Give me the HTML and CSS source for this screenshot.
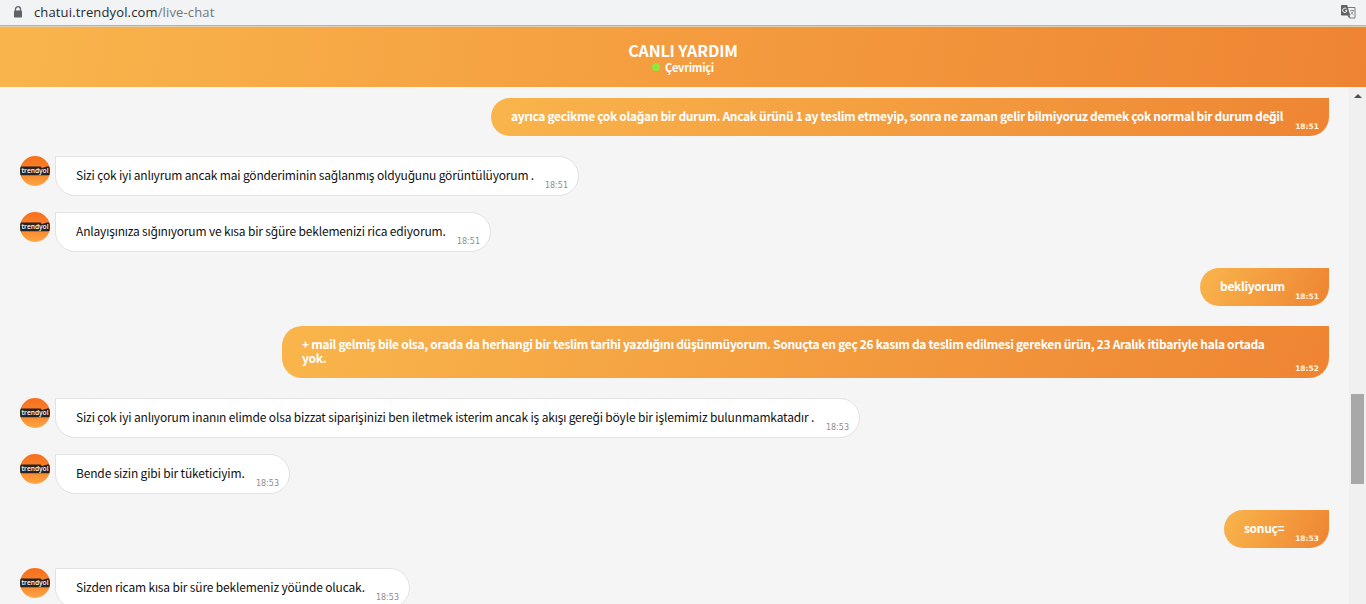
FILE: index.html
```html
<!DOCTYPE html>
<html lang="tr">
<head>
  <meta charset="UTF-8" />
  <meta name="viewport" content="width=device-width, initial-scale=1" />
  <title>Canlı Yardım</title>
  <link rel="stylesheet" href="styles.css">
</head>
<body>

<!-- avatar -->
<svg class="defs" width="0" height="0">
  <defs>
    <linearGradient id="avatarBg" x1="0" y1="0" x2="0" y2="1">
      <stop offset="0" stop-color="#f7701f" />
      <stop offset="0.55" stop-color="#f98429" />
      <stop offset="1" stop-color="#fda644" />
    </linearGradient>
    <clipPath id="avatarClip"><circle cx="15" cy="15" r="15" /></clipPath>
    <symbol id="avatar" viewBox="0 0 30 30">
      <g clip-path="url(#avatarClip)">
        <rect width="30" height="30" fill="url(#avatarBg)" />
        <path d="M0 10.5H20.5L22 12L27 10.5H30V19.3H0Z" fill="#252323" />
        <text x="15" y="17.2" text-anchor="middle" textLength="27" lengthAdjust="spacingAndGlyphs" class="logo-text">trendyol</text>
      </g>
    </symbol>
  </defs>
</svg>

<div class="address-bar">
  <svg class="lock" width="10" height="12" viewBox="0 0 10 12">
    <path d="M2.5 5V3.2a2.5 2.5 0 0 1 5 0V5" fill="none" stroke="#5f6368" stroke-width="1.3" />
    <rect x="1" y="4.5" width="8" height="7" rx="0.8" fill="#5f6368" />
  </svg>
  <span class="url">chatui.trendyol.com<span class="path">/live-chat</span></span>
  <svg class="translate" width="15" height="14" viewBox="0 0 15 14">
    <path d="M6.5 2.5H14V13H8.5L7 10.5" fill="#f4f5f6" stroke="#77797c" stroke-width="1" />
    <path d="M0.8 0H6.2L9.2 10.6H0.8A.8.8 0 0 1 0 9.8V.8A.8.8 0 0 1 .8 0Z" fill="#5f6165" />
    <path d="M6.7 10.6H9.2L8.4 13Z" fill="#5f6165" />
    <path d="M5.5 3.9A2.2 2.2 0 1 0 6 5.7H4.2" fill="none" stroke="#fff" stroke-width="1" />
    <path d="M9 5.5H13M11 4.6V5.5M12.3 5.6C11.8 7.6 10.8 8.7 9.4 9.6M9.8 6.8C10.4 8.2 11.4 9.2 12.6 9.8" fill="none" stroke="#85878a" stroke-width="0.8" />
  </svg>
</div>

<div class="header">
  <div class="title">CANLI YARDIM</div>
  <div class="status"><span class="dot"></span>Çevrimiçi</div>
</div>

<div class="chat">
  <div class="messages">
    <div class="row user">
      <div class="bubble w-838"><p>ayrıca gecikme çok olağan bir durum. Ancak ürünü 1 ay teslim etmeyip, sonra ne zaman gelir bilmiyoruz demek çok normal bir durum değil</p><span class="time">18:51</span></div>
    </div>
    <div class="row agent">
      <svg class="avatar"><use href="#avatar" /></svg>
      <div class="bubble w-524"><p>Sizi çok iyi anlıyrum ancak mai gönderiminin sağlanmış oldyuğunu görüntülüyorum .</p><span class="time">18:51</span></div>
    </div>
    <div class="row agent">
      <svg class="avatar"><use href="#avatar" /></svg>
      <div class="bubble w-436"><p>Anlayışınıza sığınıyorum ve kısa bir sğüre beklemenizi rica ediyorum.</p><span class="time">18:51</span></div>
    </div>
    <div class="row user">
      <div class="bubble w-129"><p>bekliyorum</p><span class="time">18:51</span></div>
    </div>
    <div class="row user">
      <div class="bubble w-1047"><p>+ mail gelmiş bile olsa, orada da herhangi bir teslim tarihi yazdığını düşünmüyorum. Sonuçta en geç 26 kasım da teslim edilmesi gereken ürün, 23 Aralık itibariyle hala ortada<br>yok.</p><span class="time">18:52</span></div>
    </div>
    <div class="row agent">
      <svg class="avatar"><use href="#avatar" /></svg>
      <div class="bubble w-805"><p>Sizi çok iyi anlıyorum inanın elimde olsa bizzat siparişinizi ben iletmek isterim ancak iş akışı gereği böyle bir işlemimiz bulunmamkatadır .</p><span class="time">18:53</span></div>
    </div>
    <div class="row agent">
      <svg class="avatar"><use href="#avatar" /></svg>
      <div class="bubble w-235"><p>Bende sizin gibi bir tüketiciyim.</p><span class="time">18:53</span></div>
    </div>
    <div class="row user">
      <div class="bubble w-105"><p>sonuç=</p><span class="time">18:53</span></div>
    </div>
    <div class="row agent">
      <svg class="avatar"><use href="#avatar" /></svg>
      <div class="bubble w-355"><p>Sizden ricam kısa bir süre beklemeniz yöünde olucak.</p><span class="time">18:53</span></div>
    </div>
  </div>
  <div class="scrollbar">
    <svg class="arrow" width="8" height="4" viewBox="0 0 8 4"><path d="M0 4L4 0L8 4Z" fill="#505050" /></svg>
    <div class="thumb"></div>
  </div>
</div>

</body>
</html>
```
FILE: styles.css
```css
* {
  box-sizing: border-box;
}
body {
  margin: 0;
  height: 604px;
  overflow: hidden;
  display: flex;
  flex-direction: column;
  background: #f5f5f5;
  font-family: "Noto Sans CJK SC", "Noto Sans", sans-serif;
}
.defs {
  position: absolute;
}
.address-bar {
  height: 26px;
  flex-shrink: 0;
  display: flex;
  align-items: center;
  padding: 0 10px 1px 13px;
  background: #f1f3f4;
  border-bottom: 1px solid #b5b2ae;
  font-family: "Open Sans", sans-serif;
}
.url {
  flex: 1;
  margin-left: 11px;
  font-size: 13px;
  letter-spacing: 0.14px;
  color: #27292c;
}
.path {
  color: #73767a;
}
.header {
  height: 61px;
  flex-shrink: 0;
  padding-top: 14px;
  border-top: 1px solid #e3cfb4;
  background: linear-gradient(98deg, #f9b54c, #ee8432);
  color: #fff;
  text-align: center;
  font-weight: bold;
}
.title {
  font-size: 16px;
  line-height: 18px;
  letter-spacing: -0.15px;
}
.status {
  display: flex;
  justify-content: center;
  gap: 5px;
  margin-top: 1px;
  font-size: 11px;
  line-height: 14px;
  letter-spacing: -0.25px;
}
.dot {
  width: 8px;
  height: 8px;
  margin-top: 3px;
  border-radius: 50%;
  background: #8fe63c;
}
.chat {
  flex: 1;
  display: flex;
  min-height: 0;
}
.messages {
  flex: 1;
  padding: 11px 20px 0;
  overflow: hidden;
}
.row {
  display: flex;
}
.user {
  justify-content: flex-end;
  margin-bottom: 20px;
}
.agent {
  margin-bottom: 16px;
}
.avatar {
  width: 30px;
  height: 30px;
  margin-right: 5px;
}
.logo-text {
  font: 600 7.5px "Open Sans", sans-serif;
  fill: #fff;
}
.bubble {
  display: flex;
  justify-content: space-between;
  align-items: flex-end;
  padding: 11px 10px 4px 20px;
  font-size: 12px;
  line-height: 14px;
  white-space: nowrap;
}
.bubble p {
  margin: 0;
  padding-bottom: 9px;
}
.user .bubble {
  border-radius: 20px 0 20px 20px;
  background: linear-gradient(113deg, #f9b54c, #ee8432);
  color: #fff;
  font-weight: bold;
  letter-spacing: -0.335px;
}
.agent .bubble {
  height: 40px;
  border: 1px solid #e2e2e2;
  border-radius: 0 20px 20px 20px;
  background: #fff;
  color: #111;
  letter-spacing: -0.165px;
}
.bubble .time {
  font-size: 8px;
  line-height: 10px;
  font-family: "DejaVu Sans", sans-serif;
  letter-spacing: 0;
}
.user .time {
  font-size: 7.5px;
  color: #fff3e0;
}
.agent .time {
  color: #8e8e8e;
}
.w-838 { width: 838px; }
.agent .w-524 { width: 524px; letter-spacing: -0.18px; }
.w-436 { width: 436px; }
.w-129 { width: 129px; }
.user .w-1047 { width: 1047px; letter-spacing: -0.312px; }
.w-805 { width: 805px; }
.w-235 { width: 235px; }
.w-105 { width: 105px; }
.w-355 { width: 355px; }
.scrollbar {
  width: 17px;
  padding: 7px 2px 0;
  background: #f0f0f0;
}
.arrow {
  display: block;
  margin: 0 auto;
}
.thumb {
  height: 90px;
  margin-top: 296px;
  background: #a8a8a8;
}
```
